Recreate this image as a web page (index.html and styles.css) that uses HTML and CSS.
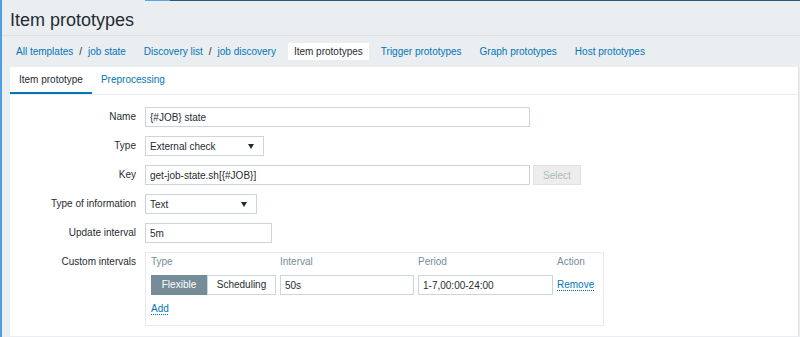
FILE: index.html
```html
<!DOCTYPE html>
<html lang="en">

<head>
    <meta charset="UTF-8">
    <meta name="viewport" content="width=device-width, initial-scale=1.0">
    <title>Item prototypes</title>
    <link rel="stylesheet" href="styles.css">
</head>

<body>
    <div class="page">
        <div class="topline">
            <span class="tl-gap"></span>
            <span class="tl-light"></span>
            <span class="tl-dark"></span>
        </div>

        <header class="page-header">
            <h1>Item prototypes</h1>
        </header>

        <nav class="crumbs">
            <span class="crumb"><a href="#">All templates</a><span class="sep">/</span><a href="#">job state</a></span>
            <span class="crumb"><a href="#">Discovery list</a><span class="sep">/</span><a href="#">job discovery</a></span>
            <span class="crumb selected">Item prototypes</span>
            <a class="crumb" href="#">Trigger prototypes</a>
            <a class="crumb" href="#">Graph prototypes</a>
            <a class="crumb" href="#">Host prototypes</a>
        </nav>

        <main class="panel">
            <ul class="tabs">
                <li class="tab active">Item prototype</li>
                <li class="tab"><a href="#">Preprocessing</a></li>
            </ul>

            <form class="form">
                <label class="label">Name</label>
                <div class="value">
                    <input class="field w-name" type="text" value="{#JOB} state">
                </div>

                <label class="label">Type</label>
                <div class="value">
                    <div class="field select w-type"><span>External check</span><span class="arrow"></span></div>
                </div>

                <label class="label">Key</label>
                <div class="value">
                    <input class="field w-name" type="text" value="get-job-state.sh[{#JOB}]">
                    <button class="btn-disabled" type="button" disabled>Select</button>
                </div>

                <label class="label">Type of information</label>
                <div class="value">
                    <div class="field select w-info"><span>Text</span><span class="arrow"></span></div>
                </div>

                <label class="label">Update interval</label>
                <div class="value">
                    <input class="field w-interval" type="text" value="5m">
                </div>

                <label class="label">Custom intervals</label>
                <div class="value">
                    <div class="intervals">
                        <div class="th">Type</div>
                        <div class="th">Interval</div>
                        <div class="th">Period</div>
                        <div class="th">Action</div>

                        <div class="seg">
                            <span class="seg-item on">Flexible</span>
                            <span class="seg-item">Scheduling</span>
                        </div>
                        <input class="field" type="text" value="50s">
                        <input class="field" type="text" value="1-7,00:00-24:00">
                        <div class="cell-action"><a class="dotted" href="#">Remove</a></div>

                        <div class="add-row"><a class="dotted" href="#">Add</a></div>
                    </div>
                </div>
            </form>
        </main>
    </div>
</body>

</html>
```

FILE: styles.css
```css
body {
    margin: 0;
    padding: 0;
    font-family: "Liberation Sans", Arial, sans-serif;
    font-size: 10px;
    color: #1f2c33;
}

a {
    color: #0275b8;
    text-decoration: none;
}

.page {
    min-height: 337px;
    box-sizing: border-box;
    background: #ebeef0;
    border-left: 2px solid #4f9fe0;
}

/* thin strip along the top edge */
.topline {
    display: flex;
    height: 1px;
}

.tl-gap {
    width: 143px;
}

.tl-light {
    width: 25px;
    background: #5aa5e0;
}

.tl-dark {
    flex: 1;
    background: #2a5678;
}

.page-header {
    height: 35px;
    padding: 4px 0 0 8px;
    box-sizing: border-box;
    border-bottom: 1px solid #dde2e5;
}

.page-header h1 {
    margin: 0;
    font-size: 18px;
    font-weight: normal;
    line-height: 31px;
    color: #1f2c33;
}

.crumbs {
    display: flex;
    align-items: center;
    gap: 6px;
    height: 31px;
    padding-left: 8px;
}

.crumb {
    display: inline-flex;
    padding: 0 6px;
    line-height: 17px;
}

.crumb .sep {
    margin: 0 6px;
    color: #1f2c33;
}

.crumb.selected {
    background: #fff;
    color: #1f2c33;
}

.panel {
    min-height: 269px;
    margin: 0 1px 0 8px;
    background: #fff;
    border-right: 1px solid #dfe4e7;
}

.tabs {
    display: flex;
    margin: 0;
    padding: 0;
    list-style: none;
    border-bottom: 1px solid #ebeef0;
}

.tab {
    padding: 0 9px;
    line-height: 25px;
    border-bottom: 2px solid transparent;
}

.tab.active {
    border-bottom-color: #0275b8;
    color: #1f2c33;
}

.form {
    display: grid;
    grid-template-columns: 126px 1fr;
    column-gap: 9px;
    row-gap: 9px;
    padding-top: 12px;
}

.label {
    line-height: 20px;
    text-align: right;
}

.value {
    display: flex;
    gap: 3px;
}

.field {
    height: 20px;
    box-sizing: border-box;
    margin: 0;
    padding: 0 4px;
    border: 1px solid #ccd5d9;
    background: #fff;
    font-family: inherit;
    font-size: 10px;
    color: #1f2c33;
    outline: none;
}

.w-name {
    width: 385px;
}

.w-type {
    width: 119px;
}

.w-info {
    width: 112px;
}

.w-interval {
    width: 127px;
}

.select {
    display: flex;
    align-items: center;
    justify-content: space-between;
}

.arrow {
    width: 0;
    height: 0;
    margin-right: 5px;
    border-left: 3px solid transparent;
    border-right: 3px solid transparent;
    border-top: 5px solid #1f2c33;
}

.btn-disabled {
    width: 48px;
    height: 20px;
    padding: 0;
    border: 1px solid #dfe2e4;
    background: #ededed;
    font-family: inherit;
    font-size: 10px;
    color: #acbbc2;
}

.intervals {
    display: grid;
    grid-template-columns: 125px 134px 135px auto;
    column-gap: 4px;
    width: 459px;
    box-sizing: border-box;
    padding: 2px 5px 9px;
    border: 1px solid #e6eaec;
}

.th {
    line-height: 14px;
    margin-bottom: 6px;
    color: #768d99;
}

.seg {
    display: flex;
}

.seg-item {
    height: 20px;
    box-sizing: border-box;
    border: 1px solid #ccd5d9;
    line-height: 18px;
    text-align: center;
    width: 69px;
}

.seg-item.on {
    width: 56px;
    background: #768d99;
    border-color: #768d99;
    color: #fff;
}

.cell-action {
    line-height: 20px;
}

.dotted {
    text-decoration: underline dotted;
    text-underline-offset: 2px;
}

.add-row {
    grid-column: 1 / -1;
    margin-top: 7px;
    line-height: 14px;
}
```
